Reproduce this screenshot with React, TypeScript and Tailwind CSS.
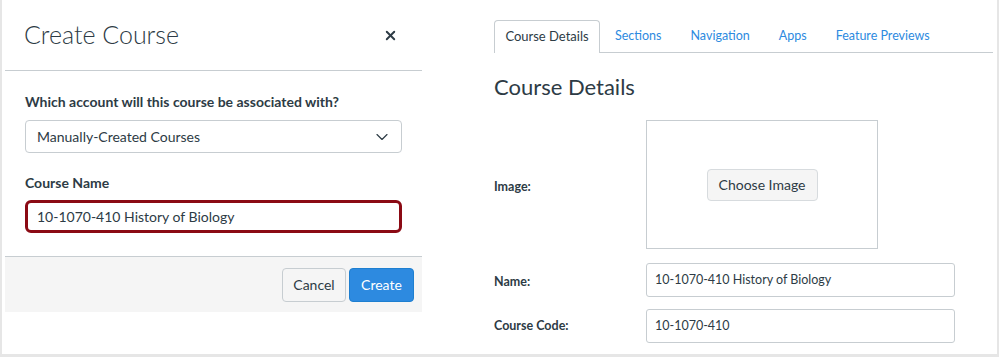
import { ChevronDown, X } from "lucide-react";

const tabs = ["Sections", "Navigation", "Apps", "Feature Previews"];

const CreateCourseModal = () => {
  return (
    <section className="flex w-[417px] flex-col">
      <header className="flex h-[71px] items-center justify-between border-b border-[#c7cdd1] pl-[19px] pr-[24px]">
        <h2 className="text-[25px] font-light text-[#2d3b45]">Create Course</h2>
        <button type="button" aria-label="Close" className="text-[#2d3b45]">
          <X size={15} strokeWidth={3} />
        </button>
      </header>

      <div className="flex flex-col px-[20px] pt-[21px] pb-[23px]">
        <label className="text-[14px] font-bold leading-[20px] text-[#2d3b45]">
          Which account will this course be associated with?
        </label>
        <div className="mt-[8px] flex h-[33px] w-[377px] items-center justify-between rounded-[4px] border border-[#c7cdd1] pl-[11px] pr-[9px] text-[14px] text-[#2d3b45]">
          <span>Manually-Created Courses</span>
          <ChevronDown size={20} strokeWidth={1.4} />
        </div>

        <label className="mt-[20px] text-[14px] font-bold leading-[20px] text-[#2d3b45]">Course Name</label>
        <div className="mt-[7px] flex h-[33px] w-[377px] items-center rounded-[6px] border-[3px] border-[#8b0a14] pl-[9px] text-[14px] text-[#2d3b45]">
          10-1070-410 History of Biology
        </div>
      </div>

      <footer className="flex h-[56px] items-center justify-end gap-[3px] border-t border-[#c7cdd1] bg-[#f5f5f5] pr-[8px]">
        <button
          type="button"
          className="h-[34px] w-[64px] rounded-[4px] border border-[#c7cdd1] bg-[#f5f5f5] text-[14px] text-[#2d3b45]"
        >
          Cancel
        </button>
        <button
          type="button"
          className="h-[34px] w-[65px] rounded-[4px] border border-[#1e7fd0] bg-[#2d8ae0] text-[14px] text-white"
        >
          Create
        </button>
      </footer>
    </section>
  );
};

const CourseSettings = () => {
  return (
    <section className="flex flex-1 flex-col pt-[20px] pr-[4px]">
      <nav className="flex h-[33px] items-end border-b border-[#c7cdd1]">
        <div className="-mb-px flex h-[33px] w-[106px] items-center justify-center rounded-t-[4px] border border-b-0 border-[#c7cdd1] bg-white text-[13px] text-[#2d3b45]">
          Course Details
        </div>
        <div className="flex h-[32px] items-center gap-[29px] pl-[15px] text-[12.5px] text-[#2d8ae0]">
          {tabs.map((tab) => (
            <span key={tab}>{tab}</span>
          ))}
        </div>
      </nav>

      <h1 className="mt-[19px] text-[22px] font-normal leading-[30px] text-[#2d3b45]">Course Details</h1>

      <div className="mt-[18px] flex items-center">
        <span className="w-[152px] pt-[5px] text-[12.5px] font-bold text-[#2d3b45]">Image:</span>
        <div className="flex h-[129px] w-[232px] items-center justify-center border border-[#c7cdd1]">
          <button
            type="button"
            className="h-[32px] w-[111px] rounded-[4px] border border-[#d7dbde] bg-[#f5f5f5] text-[14px] text-[#2d3b45]"
          >
            Choose Image
          </button>
        </div>
      </div>

      <div className="mt-[14px] flex items-center">
        <span className="w-[152px] pt-[4px] text-[12.5px] font-bold text-[#2d3b45]">Name:</span>
        <div className="flex h-[34px] w-[309px] items-center rounded-[3px] border border-[#c7cdd1] pl-[8px] text-[12.5px] text-[#2d3b45]">
          10-1070-410 History of Biology
        </div>
      </div>

      <div className="mt-[12px] flex items-center">
        <span className="w-[152px] pt-[1px] text-[12.5px] font-bold text-[#2d3b45]">Course Code:</span>
        <div className="flex h-[34px] w-[309px] items-center rounded-[3px] border border-[#c7cdd1] pl-[8px] text-[12.5px] text-[#2d3b45]">
          10-1070-410
        </div>
      </div>
    </section>
  );
};

const App = () => {
  return (
    <main
      className="flex h-[357px] w-[999px] gap-[72px] border-x-2 border-b-[3px] border-[#e6e6e6] bg-white pl-[3px]"
      style={{ fontFamily: "Lato, 'Noto Sans', sans-serif" }}
    >
      <CreateCourseModal />
      <CourseSettings />
    </main>
  );
};

export default App;
